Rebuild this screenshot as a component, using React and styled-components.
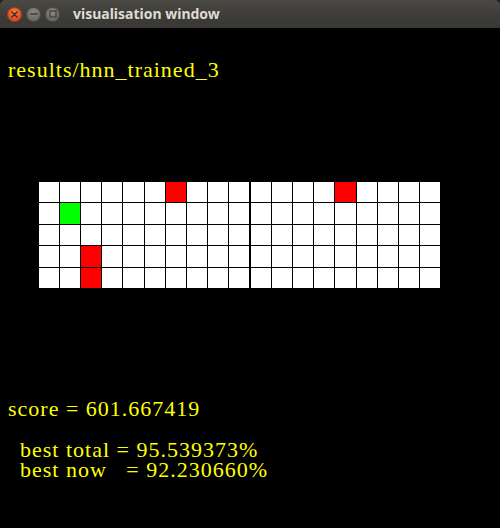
import React from "react";
import styled, { createGlobalStyle } from "styled-components";

const Global = createGlobalStyle`
  html, body { margin: 0; padding: 0; background: #2c1a28; }
  body { width: 500px; height: 528px; overflow: hidden; }
`;

const Window = styled.div`
  width: 500px;
  height: 528px;
  display: flex;
  flex-direction: column;
  background: #000;
  border-radius: 5px 5px 0 0;
  overflow: hidden;
`;

const TitleBar = styled.div`
  height: 28px;
  flex: none;
  display: flex;
  align-items: center;
  padding-left: 7px;
  background: linear-gradient(#4a4944, #3c3b37 60%, #393834);
  box-sizing: border-box;
`;

const Buttons = styled.div`
  display: flex;
  gap: 4px;
`;

const RoundButton = styled.div`
  width: 15px;
  height: 15px;
  border-radius: 50%;
  box-sizing: border-box;
  display: flex;
  align-items: center;
  justify-content: center;
  border: 1px solid ${(p) => (p.$close ? "#b0401a" : "#4f4e4a")};
  background: ${(p) =>
    p.$close
      ? "radial-gradient(circle at 50% 35%, #f5804f, #e0521f 60%, #c94515)"
      : "radial-gradient(circle at 50% 35%, #8a8984, #6f6e69 60%, #5f5e5a)"};
`;

const Title = styled.div`
  margin-left: 13px;
  font-family: "Noto Sans", "DejaVu Sans", sans-serif;
  font-weight: 700;
  font-size: 14px;
  color: #dfdbd2;
  line-height: 28px;
  padding-bottom: 1px;
`;

const Canvas = styled.div`
  flex: 1;
  background: #000;
  display: flex;
  flex-direction: column;
  padding-left: 8px;
`;

const Label = styled.div`
  font-family: "Liberation Serif", "Times New Roman", serif;
  font-size: 22px;
  line-height: ${(p) => p.$lh || 22}px;
  letter-spacing: 1px;
  color: #ffff00;
  white-space: pre;
  margin-top: ${(p) => p.$mt || 0}px;
  padding-left: ${(p) => p.$indent || 0}px;
`;

const Board = styled.div`
  margin-top: ${(p) => p.$mt}px;
  margin-left: 31px;
  width: 401px;
  height: 106px;
  display: flex;
  gap: 2px;
`;

const Panel = styled.div`
  flex: ${(p) => p.$cols};
  display: grid;
  grid-template-columns: repeat(${(p) => p.$cols}, 1fr);
  grid-template-rows: repeat(5, 1fr);
  gap: 1px;
  background: #000;
`;

const Cell = styled.div`
  background: ${(p) =>
    p.$kind === "red" ? "#ff0000" : p.$kind === "green" ? "#00ff00" : "#ffffff"};
`;

const leftMarks = { "0,6": "red", "1,1": "green", "3,2": "red", "4,2": "red" };
const rightMarks = { "0,4": "red" };

function PanelGrid({ cols, marks }) {
  const cells = [];
  for (let r = 0; r < 5; r++) {
    for (let c = 0; c < cols; c++) {
      cells.push(<Cell key={`${r}-${c}`} $kind={marks[`${r},${c}`]} />);
    }
  }
  return <Panel $cols={cols}>{cells}</Panel>;
}

export default function App() {
  return (
    <>
      <Global />
      <Window>
        <TitleBar>
          <Buttons>
            <RoundButton $close>
              <svg width="7" height="7" viewBox="0 0 7 7">
                <path d="M1 1L6 6M6 1L1 6" stroke="#3a2a22" strokeWidth="1.4" strokeLinecap="round" />
              </svg>
            </RoundButton>
            <RoundButton>
              <svg width="8" height="8" viewBox="0 0 8 8">
                <path d="M0.5 4H7.5" stroke="#3c3b37" strokeWidth="1.6" />
              </svg>
            </RoundButton>
            <RoundButton>
              <svg width="8" height="8" viewBox="0 0 8 8">
                <rect x="1" y="1" width="6" height="6" fill="none" stroke="#3c3b37" strokeWidth="1.2" />
              </svg>
            </RoundButton>
          </Buttons>
          <Title>visualisation window</Title>
        </TitleBar>
        <Canvas>
          <Label $mt={31}>results/hnn_trained_3</Label>
          <Board $mt={101}>
            <PanelGrid cols={10} marks={leftMarks} />
            <PanelGrid cols={9} marks={rightMarks} />
          </Board>
          <Label $mt={110}>score = 601.667419</Label>
          <Label $mt={20} $lh={20} $indent={12}>best total = 95.539373%</Label>
          <Label $lh={20} $indent={12}>best now   = 92.230660%</Label>
        </Canvas>
      </Window>
    </>
  );
}
